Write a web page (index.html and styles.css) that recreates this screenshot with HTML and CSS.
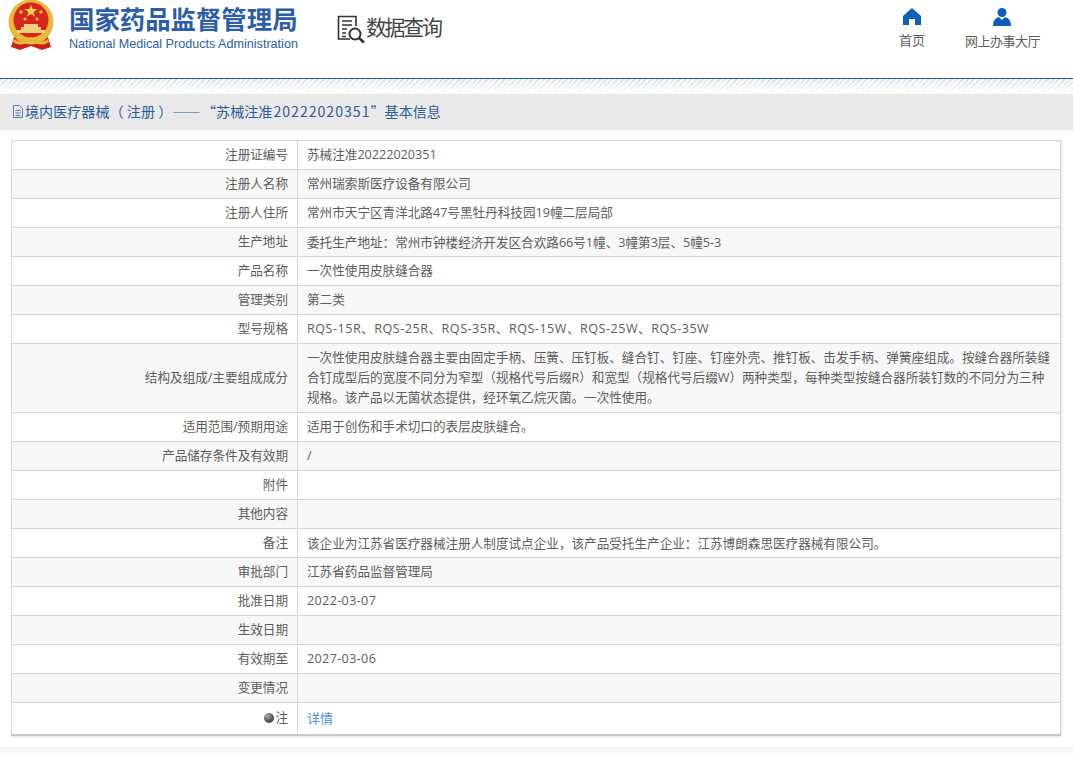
FILE: index.html
```html
<!DOCTYPE html>
<html lang="zh-CN">
<head>
<meta charset="utf-8">
<title>数据查询</title>
<link rel="stylesheet" href="styles.css">
</head>
<body>
<header class="header">
  <svg class="emblem" viewBox="0 0 46 50" width="46" height="50">
    <path d="M7 34 L3 47 L12 50 L23 46 L34 50 L43 47 L39 34 Z" fill="#c9201c"/>
    <circle cx="23" cy="22" r="22.5" fill="#e8b83a"/>
    <circle cx="23" cy="20" r="17.500" fill="#d7261e"/>
    <path d="M23 4.500l1.600 4.600h4.900l-3.900 2.900 1.400 4.700-4-2.800-4 2.800 1.400-4.700-3.900-2.900h4.900z" fill="#f5d04c"/>
    <circle cx="13" cy="12" r="1.700" fill="#f5d04c"/>
    <circle cx="33" cy="12" r="1.700" fill="#f5d04c"/>
    <circle cx="17" cy="19" r="1.500" fill="#f5d04c"/>
    <circle cx="29" cy="19" r="1.500" fill="#f5d04c"/>
    <path d="M9 33h28v-3h-4v-3h-3v-3H16v3h-3v3H9z" fill="#f0cf7a"/>
    <path d="M6 39c5 4 10 3 17-2 7 5 12 6 17 2l1 3c-6 4-12 3-18-1-6 4-12 5-18 1z" fill="#e8b83a"/>
  </svg>
  <div class="brand">
    <div class="brand-cn">国家药品监督管理局</div>
    <div class="brand-en">National Medical Products Administration</div>
  </div>
  <div class="query">
    <svg class="query-icon" viewBox="0 0 30 29" width="30" height="29" fill="none" stroke="#333" stroke-width="1.600">
      <path d="M13 24H1.500V1.500H19V11"/>
      <path d="M5 6h10M5 10h10M5 14h5M5 18h4M5 21.500h4"/>
      <circle cx="18" cy="19" r="5.500" stroke-width="2"/>
      <path d="M22 23l5 4.500" stroke-width="2.600"/>
    </svg>
    <span class="query-text">数据查询</span>
  </div>
  <nav class="nav">
    <a class="nav-item">
      <svg viewBox="0 0 18 17" width="18" height="17"><path d="M9 0L18 8V17H12V11H6V17H0V8Z" fill="#0f5fb8"/></svg>
      <span>首页</span>
    </a>
    <a class="nav-item">
      <svg viewBox="0 0 18 18" width="18" height="18"><circle cx="9" cy="4.500" r="4.500" fill="#0f5fb8"/><path d="M0 18c0-5 2-8 6-9l3 3 3-3c4 1 6 4 6 9z" fill="#0f5fb8"/></svg>
      <span class="nav-wide">网上办事大厅</span>
    </a>
  </nav>
</header>
<div class="rule"></div>
<div class="title-bar">
  <svg class="doc-icon" viewBox="0 0 12 13" width="12" height="13" fill="none" stroke="#5a7fa8"><path d="M1.500 .5h6l3 3v9h-9zM3.500 5.500h5M3.500 8h5M3.500 10.500h5"/></svg>
  <span>境内医疗器械（ 注册 ）<span class="dash">——</span>“苏械注准<span class="title-num">20222020351</span>”基本信息</span>
</div>
<main class="content">
<table class="info">
  <colgroup><col class="col-label"><col></colgroup>
  <tbody>
    <tr><th>注册证编号</th><td>苏械注准20222020351</td></tr>
    <tr><th>注册人名称</th><td>常州瑞索斯医疗设备有限公司</td></tr>
    <tr><th>注册人住所</th><td>常州市天宁区青洋北路47号黑牡丹科技园19幢二层局部</td></tr>
    <tr><th>生产地址</th><td>委托生产地址<span class="mid">：</span>常州市钟楼经济开发区合欢路66号1幢、3幢第3层、5幢5-3</td></tr>
    <tr><th>产品名称</th><td>一次性使用皮肤缝合器</td></tr>
    <tr><th>管理类别</th><td>第二类</td></tr>
    <tr><th>型号规格</th><td class="models">RQS-15R、RQS-25R、RQS-35R、RQS-15W、RQS-25W、RQS-35W</td></tr>
    <tr class="tall"><th>结构及组成/主要组成成分</th><td>一次性使用皮肤缝合器主要由固定手柄、压簧、压钉板、缝合钉、钉座、钉座外壳、推钉板、击发手柄、弹簧座组成。按缝合器所装缝合钉成型后的宽度不同分为窄型（规格代号后缀R）和宽型（规格代号后缀W）两种类型，每种类型按缝合器所装钉数的不同分为三种规格。该产品以无菌状态提供，经环氧乙烷灭菌。一次性使用。</td></tr>
    <tr><th>适用范围/预期用途</th><td>适用于创伤和手术切口的表层皮肤缝合。</td></tr>
    <tr><th>产品储存条件及有效期</th><td>/</td></tr>
    <tr><th>附件</th><td></td></tr>
    <tr><th>其他内容</th><td></td></tr>
    <tr><th>备注</th><td>该企业为江苏省医疗器械注册人制度试点企业<span class="mid">，</span>该产品受托生产企业<span class="mid">：</span>江苏博朗森思医疗器械有限公司。</td></tr>
    <tr><th>审批部门</th><td>江苏省药品监督管理局</td></tr>
    <tr><th>批准日期</th><td class="latin">2022-03-07</td></tr>
    <tr><th>生效日期</th><td></td></tr>
    <tr><th>有效期至</th><td class="latin">2027-03-06</td></tr>
    <tr><th>变更情况</th><td></td></tr>
    <tr class="last"><th><span class="dot"></span>注</th><td><a class="detail">详情</a></td></tr>
  </tbody>
</table>
</main>
<div class="foot"></div>
</body>
</html>
```
FILE: styles.css
```css
* { box-sizing: border-box; }
html, body { margin: 0; padding: 0; }
body {
  width: 1073px;
  height: 757px;
  overflow: hidden;
  background: #fff;
  font-family: "Noto Sans CJK SC", "Liberation Sans", sans-serif;
  font-size: 13px;
  color: #5c5c5c;
}
.header {
  display: flex;
  align-items: flex-start;
  height: 78px;
  padding-left: 8px;
}
.emblem { flex: none; }
.brand { margin-left: 15px; margin-top: 2px; color: #2b5ea6; }
.brand-cn {
  font-size: 25.4px;
  line-height: 32px;
  font-weight: 700;
  white-space: nowrap;
}
.brand-en {
  font-family: "Liberation Sans", sans-serif;
  font-size: 12.600px;
  line-height: 14px;
  margin-top: 3px;
  white-space: nowrap;
}
.query { display: flex; align-items: flex-start; margin-left: 39px; margin-top: 15px; }
.query-icon { flex: none; }
.query-text {
  font-size: 21px;
  line-height: 22px;
  letter-spacing: -2.300px;
  color: #444;
  margin-left: -1px;
  white-space: nowrap;
}
.nav { display: flex; margin-left: auto; margin-right: 33px; margin-top: 8px; gap: 40px; }
.nav-item {
  display: flex;
  flex-direction: column;
  align-items: center;
  gap: 6px;
  color: #5c5c5c;
  line-height: 18px;
  white-space: nowrap;
}
.nav-wide { letter-spacing: -.5px; }
.rule {
  height: 16px;
  border-top: 1px solid #1f5ea8;
  background:
    linear-gradient(to bottom, rgba(255,255,255,0), #fff 90%),
    repeating-linear-gradient(135deg, #d5e0ec 0 2px, #fff 2px 4px);
}
.title-bar {
  display: flex;
  align-items: center;
  height: 36px;
  padding: 0 0 2px 12px;
  background: #e9e9e9;
  color: #2b5c94;
  font-size: 14.100px;
  white-space: nowrap;
}
.doc-icon { flex: none; margin-right: 1px; }
.dash { letter-spacing: 1.500px; }
.title-num { letter-spacing: 1px; margin-left: 1px; }
.content { padding: 10px 12px 0 11px; }
.info {
  width: 1050px;
  border-collapse: collapse;
  table-layout: fixed;
  border: 1px solid #d6d6d6;
  border-bottom: 2px solid #c8c8c8;
  box-shadow: 1px 1px 2px #e4e4e4;
}
.col-label { width: 286px; }
.info th, .info td {
  height: 29px;
  border: 1px solid #d6d6d6;
  padding: 2px 8px 2px 9px;
  font-family: "Open Sans", "Noto Sans CJK SC", sans-serif;
  font-size: 12.600px;
  font-weight: 400;
  line-height: 20px;
  color: #5c5c5c;
  vertical-align: middle;
}
.info th { text-align: right; padding-right: 9px; }
.info .latin { letter-spacing: .35px; }
.info .models { letter-spacing: .5px; }
.mid { font-family: "Noto Sans CJK TC", sans-serif; }
.info tr:nth-child(even) th, .info tr:nth-child(even) td { background: #f7f7f7; }
.info .tall th, .info .tall td { height: 69px; }
.info .last th, .info .last td { height: 32px; }
.dot {
  display: inline-block;
  width: 10px;
  height: 10px;
  margin-right: 1px;
  vertical-align: -1px;
  border-radius: 50%;
  background: radial-gradient(circle at 35% 30%, #aaa, #444 70%);
}
.detail { color: #4a90d9; font-size: 13px; }
.foot {
  height: 11px;
  margin-top: 11px;
  background: linear-gradient(to bottom, #f2f2f2, #fff);
}
```
